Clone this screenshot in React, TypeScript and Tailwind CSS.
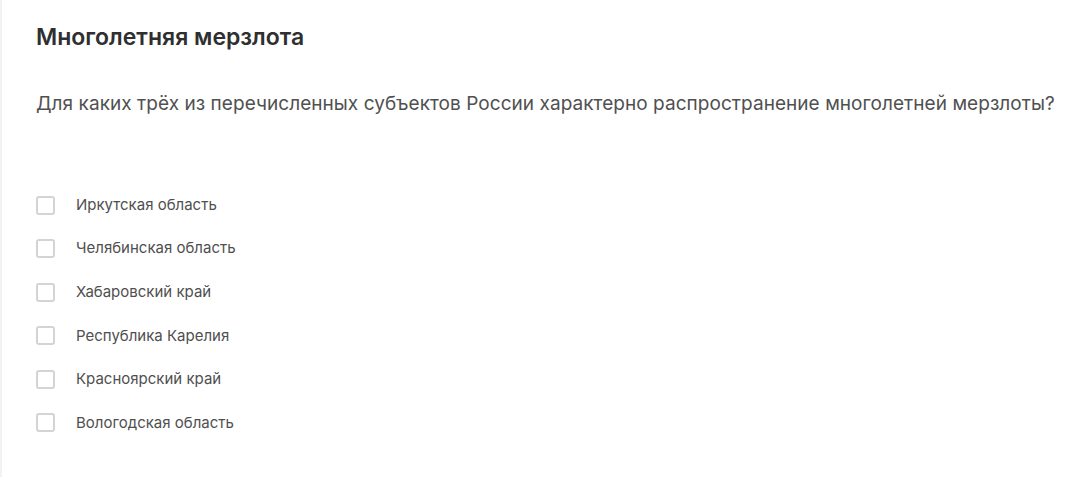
const options = [
  'Иркутская область',
  'Челябинская область',
  'Хабаровский край',
  'Республика Карелия',
  'Красноярский край',
  'Вологодская область',
]

export default function App() {
  return (
    <div className="w-[1087px] h-[477px] bg-white border-l-2 border-[#f2f2f2] font-['Inter',sans-serif] overflow-hidden">
      <div className="pl-[34px] pt-[23px]">
        <h2 className="text-[23px] leading-[28px] font-semibold text-[#2f2f2f]">
          Многолетняя мерзлота
        </h2>
        <p className="mt-[40px] text-[19px] leading-[26px] text-[#505050] tracking-[0.05px]">
          Для каких трёх из перечисленных субъектов России характерно распространение многолетней мерзлоты?
        </p>
        <ul className="mt-[79px] flex flex-col gap-[25.6px]">
          {options.map((label) => (
            <li key={label} className="flex items-center h-[18px]">
              <span className="w-[19px] h-[19px] rounded-[3px] border-2 border-[#d4d4d4] bg-white" />
              <span className="ml-[21px] text-[15px] text-[#4f4f4f]">{label}</span>
            </li>
          ))}
        </ul>
      </div>
    </div>
  )
}
